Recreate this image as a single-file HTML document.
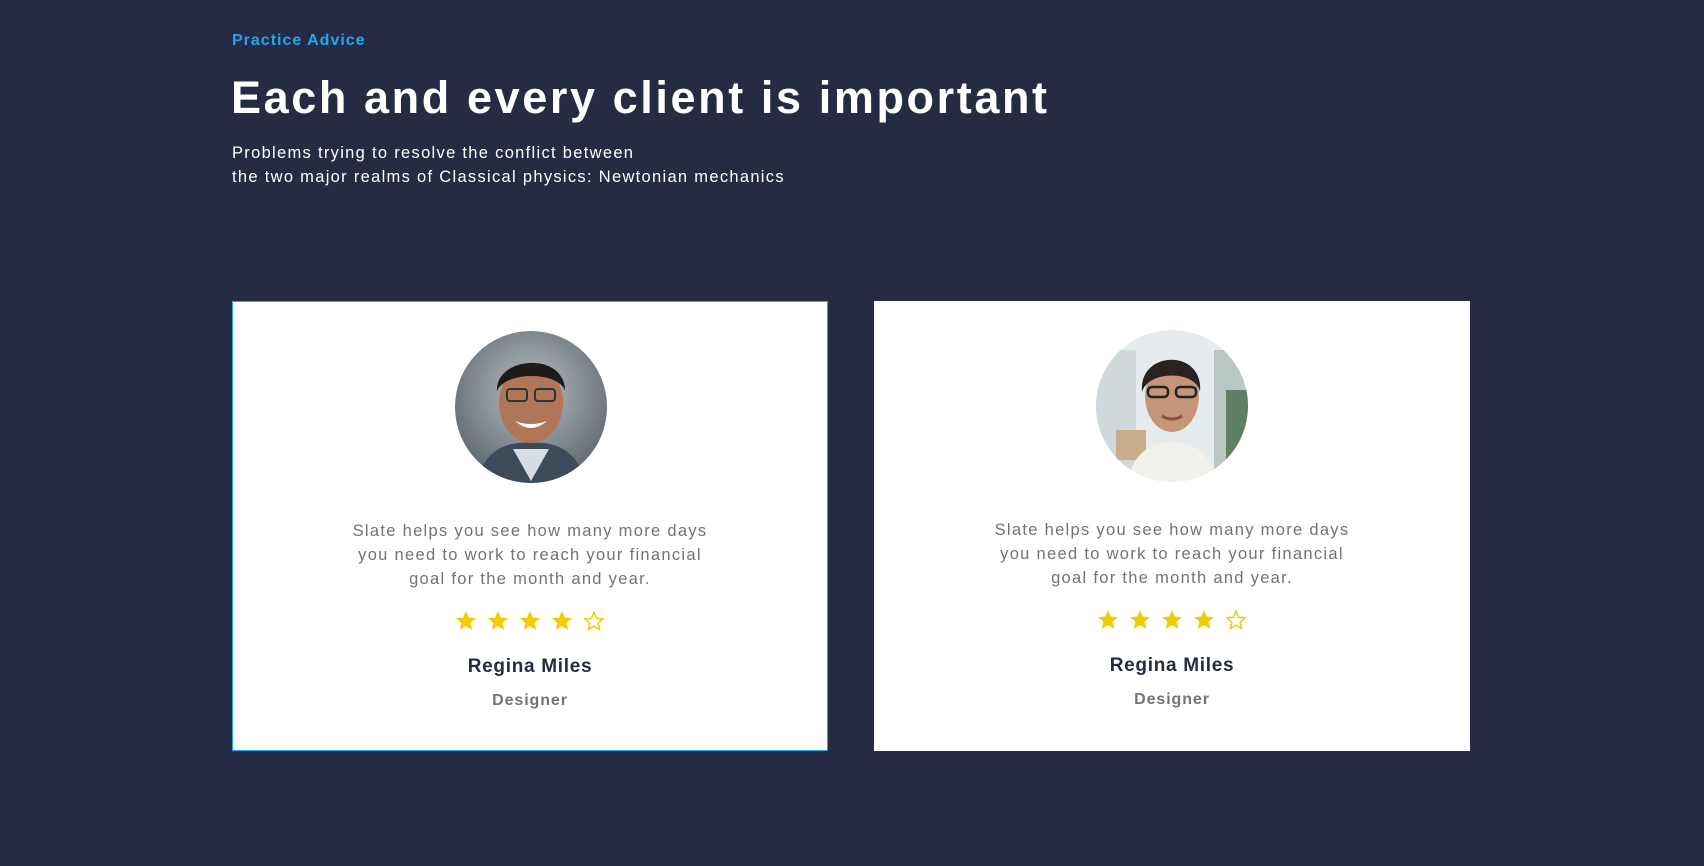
<!DOCTYPE html>
<html><head><meta charset="utf-8"><style>
*{margin:0;padding:0;box-sizing:border-box}
body{width:1704px;height:866px;background:#252b42;font-family:"Liberation Sans",sans-serif;position:relative;overflow:hidden}
.t{position:absolute;left:232px}
.tag{top:32px;color:#23a6f0;font-weight:bold;font-size:16px;letter-spacing:1px}
h1{position:absolute;left:231px;top:72px;color:#fff;font-size:45px;font-weight:bold;letter-spacing:2.6px;width:823px;overflow:hidden;white-space:nowrap}
.sub{top:141px;color:#fff;font-size:16.5px;line-height:24px;letter-spacing:1.3px}
.card{position:absolute;top:301px;width:596px;height:450px;background:#fff;text-align:center}
.c1{left:232px;border:1px solid #23a6f0}
.c2{left:874px}
.av{position:absolute;left:222px;top:29px;width:152px;height:152px;border-radius:50%;overflow:hidden}
.q{position:absolute;left:0;right:0;top:217px;color:#737373;font-size:16.5px;line-height:24px;letter-spacing:1.3px}
.st{position:absolute;left:0;right:0;top:308px;height:30px;display:flex;justify-content:center;gap:10px}
.nm{position:absolute;left:0;right:0;top:354px;color:#252b42;font-weight:bold;font-size:19px;letter-spacing:0.7px}
.ds{position:absolute;left:0;right:0;top:390px;color:#737373;font-weight:bold;font-size:16px;letter-spacing:0.9px}
</style></head><body>
<div class="t tag">Practice Advice</div>
<h1>Each and every client is important</h1>
<div class="t sub">Problems trying to resolve the conflict between<br>the two major realms of Classical physics: Newtonian mechanics</div>

<div class="card c1">
<div class="av"><svg width="152" height="152" viewBox="0 0 152 152">
<defs><radialGradient id="g1" cx="50%" cy="40%" r="60%"><stop offset="0" stop-color="#b9c0c3"/><stop offset="1" stop-color="#5f6a70"/></radialGradient></defs>
<rect width="152" height="152" fill="url(#g1)"/>
<path d="M20 152 C30 120 50 110 76 112 C102 110 122 120 132 152Z" fill="#3d4a5a"/>
<path d="M58 118 L76 150 L94 118Z" fill="#d8dde4"/>
<ellipse cx="76" cy="72" rx="32" ry="40" fill="#b07658"/>
<path d="M42 60 C40 25 110 20 110 60 C104 40 50 40 42 60Z" fill="#1e1a1a"/>
<rect x="52" y="58" width="20" height="12" rx="3" fill="none" stroke="#333" stroke-width="2"/>
<rect x="80" y="58" width="20" height="12" rx="3" fill="none" stroke="#333" stroke-width="2"/>
<path d="M60 90 Q76 104 92 90 Q76 96 60 90Z" fill="#fff"/>
</svg></div>
<div class="q">Slate helps you see how many more days<br>you need to work to reach your financial<br>goal for the month and year.</div>
<div class="st">
<svg width="22" height="22" viewBox="0 0 24 24"><path d="M12 1l3.1 7.3 7.9.6-6 5.2 1.9 7.7L12 17.6 5.1 21.8 7 14.1 1 8.9l7.9-.6z" fill="#f3cd03"/></svg>
<svg width="22" height="22" viewBox="0 0 24 24"><path d="M12 1l3.1 7.3 7.9.6-6 5.2 1.9 7.7L12 17.6 5.1 21.8 7 14.1 1 8.9l7.9-.6z" fill="#f3cd03"/></svg>
<svg width="22" height="22" viewBox="0 0 24 24"><path d="M12 1l3.1 7.3 7.9.6-6 5.2 1.9 7.7L12 17.6 5.1 21.8 7 14.1 1 8.9l7.9-.6z" fill="#f3cd03"/></svg>
<svg width="22" height="22" viewBox="0 0 24 24"><path d="M12 1l3.1 7.3 7.9.6-6 5.2 1.9 7.7L12 17.6 5.1 21.8 7 14.1 1 8.9l7.9-.6z" fill="#f3cd03"/></svg>
<svg width="22" height="22" viewBox="0 0 24 24"><path d="M12 2.5l2.8 6.6 7.1.6-5.4 4.7 1.7 7L12 17.6 5.8 21.4l1.7-7L2.1 9.7l7.1-.6z" fill="none" stroke="#f3cd03" stroke-width="1.6"/></svg>
</div>
<div class="nm">Regina Miles</div>
<div class="ds">Designer</div>
</div>

<div class="card c2">
<div class="av"><svg width="152" height="152" viewBox="0 0 152 152">
<rect width="152" height="152" fill="#e6ecee"/>
<rect x="0" y="20" width="40" height="120" fill="#cfd8da"/>
<rect x="118" y="20" width="34" height="130" fill="#b9c8c4"/>
<rect x="130" y="60" width="22" height="80" fill="#5e7f64"/>
<rect x="20" y="100" width="30" height="30" fill="#c7ad8c"/>
<path d="M30 152 C40 120 56 112 76 112 C96 112 112 120 122 152Z" fill="#f3f1ec"/>
<ellipse cx="76" cy="66" rx="27" ry="36" fill="#c49578"/>
<path d="M46 62 C42 20 108 18 104 62 C100 40 52 40 46 62Z" fill="#2a2220"/>
<rect x="52" y="57" width="20" height="10" rx="4" fill="none" stroke="#222" stroke-width="2.5"/>
<rect x="80" y="57" width="20" height="10" rx="4" fill="none" stroke="#222" stroke-width="2.5"/>
<path d="M66 86 Q76 92 86 86" stroke="#8a4b44" stroke-width="3" fill="none"/>
</svg></div>
<div class="q">Slate helps you see how many more days<br>you need to work to reach your financial<br>goal for the month and year.</div>
<div class="st">
<svg width="22" height="22" viewBox="0 0 24 24"><path d="M12 1l3.1 7.3 7.9.6-6 5.2 1.9 7.7L12 17.6 5.1 21.8 7 14.1 1 8.9l7.9-.6z" fill="#f3cd03"/></svg>
<svg width="22" height="22" viewBox="0 0 24 24"><path d="M12 1l3.1 7.3 7.9.6-6 5.2 1.9 7.7L12 17.6 5.1 21.8 7 14.1 1 8.9l7.9-.6z" fill="#f3cd03"/></svg>
<svg width="22" height="22" viewBox="0 0 24 24"><path d="M12 1l3.1 7.3 7.9.6-6 5.2 1.9 7.7L12 17.6 5.1 21.8 7 14.1 1 8.9l7.9-.6z" fill="#f3cd03"/></svg>
<svg width="22" height="22" viewBox="0 0 24 24"><path d="M12 1l3.1 7.3 7.9.6-6 5.2 1.9 7.7L12 17.6 5.1 21.8 7 14.1 1 8.9l7.9-.6z" fill="#f3cd03"/></svg>
<svg width="22" height="22" viewBox="0 0 24 24"><path d="M12 2.5l2.8 6.6 7.1.6-5.4 4.7 1.7 7L12 17.6 5.8 21.4l1.7-7L2.1 9.7l7.1-.6z" fill="none" stroke="#f3cd03" stroke-width="1.6"/></svg>
</div>
<div class="nm">Regina Miles</div>
<div class="ds">Designer</div>
</div>
</body></html>
